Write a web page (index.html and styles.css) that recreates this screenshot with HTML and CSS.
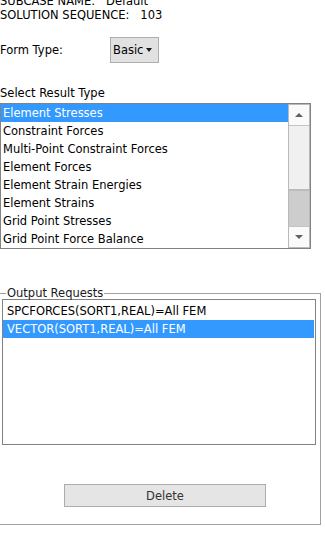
FILE: index.html
```html
<!DOCTYPE html>
<html>
<head>
<meta charset="utf-8">
<link rel="stylesheet" href="styles.css">
</head>
<body>
<div class="header">
  <div class="hline">SUBCASE NAME:&nbsp;&nbsp; Default</div>
  <div class="hline">SOLUTION SEQUENCE:&nbsp;&nbsp; 103</div>
</div>

<div class="form-row">
  <span class="form-label">Form Type:</span>
  <div class="combo"><span>Basic</span><i class="tri-down dark"></i></div>
</div>

<div class="section-label">Select Result Type</div>
<div class="listbox">
  <div class="items">
    <div class="row sel">Element Stresses</div>
    <div class="row">Constraint Forces</div>
    <div class="row">Multi-Point Constraint Forces</div>
    <div class="row">Element Forces</div>
    <div class="row">Element Strain Energies</div>
    <div class="row">Element Strains</div>
    <div class="row">Grid Point Stresses</div>
    <div class="row">Grid Point Force Balance</div>
  </div>
  <div class="vscroll">
    <div class="sbtn up"><i class="tri-up"></i></div>
    <div class="track"></div>
    <div class="thumb"></div>
    <div class="sbtn down"><i class="tri-down"></i></div>
  </div>
</div>

<fieldset class="group">
  <legend>Output Requests</legend>
  <div class="outlist">
    <div class="orow">SPCFORCES(SORT1,REAL)=All FEM</div>
    <div class="orow sel">VECTOR(SORT1,REAL)=All FEM</div>
  </div>
  <div class="btn-row"><div class="btn">Delete</div></div>
</fieldset>
</body>
</html>
```

FILE: styles.css
```css
html, body {
  margin: 0;
  padding: 0;
  background: #ffffff;
  overflow: hidden;
}
body {
  font-family: "DejaVu Sans", Verdana, sans-serif;
  font-size: 11.5px;
  color: #000;
  width: 325px;
  height: 545px;
}
.header {
  margin-top: -6px;
}
.hline {
  line-height: 14px;
  height: 14px;
  white-space: pre;
}
.form-row {
  display: flex;
  align-items: center;
  height: 26px;
  margin-top: 15px;
}
.form-label {
  width: 110px;
}
.combo {
  box-sizing: border-box;
  width: 49px;
  height: 26px;
  background: #e1e1e1;
  border: 1px solid #adadad;
  display: flex;
  align-items: center;
  padding-left: 2px;
  gap: 3px;
}
.tri-down {
  display: block;
  width: 0;
  height: 0;
  border-left: 4px solid transparent;
  border-right: 4px solid transparent;
  border-top: 4px solid #606060;
}
.tri-down.dark {
  border-top-color: #1a1a1a;
  border-left-width: 3.5px;
  border-right-width: 3.5px;
}
.tri-up {
  display: block;
  width: 0;
  height: 0;
  border-left: 4px solid transparent;
  border-right: 4px solid transparent;
  border-bottom: 4px solid #606060;
}
.section-label {
  margin-top: 23px;
  line-height: 14px;
  height: 14px;
}
.listbox {
  margin-top: 3px;
  box-sizing: border-box;
  width: 311px;
  height: 146px;
  border: 1px solid #828282;
  display: flex;
}
.items {
  flex: 1;
  overflow: hidden;
}
.row {
  height: 18px;
  line-height: 18px;
  padding-left: 2px;
  white-space: nowrap;
}
.row.sel, .orow.sel {
  background: #3399ff;
  color: #fff;
}
.vscroll {
  box-sizing: border-box;
  width: 22px;
  border: 1px solid #b9b9b9;
  display: flex;
  flex-direction: column;
}
.sbtn {
  height: 21px;
  box-sizing: border-box;
  background: #fafafa;
  display: flex;
  align-items: center;
  justify-content: center;
}
.sbtn.up {
  border-bottom: 1px solid #c4c4c4;
}
.sbtn.down {
  border-top: 1px solid #c4c4c4;
}
.track {
  height: 63px;
  background: #f0f0f0;
}
.thumb {
  box-sizing: border-box;
  height: 37px;
  background: #cdcdcd;
  border-top: 2px solid #bcbcbc;
}
.group {
  margin: 38px 0 0 -1px;
  box-sizing: border-box;
  width: 322px;
  border: 1px solid #a0a0a0;
  padding: 0 4px 17px 2px;
}
.group legend {
  margin-left: 4px;
  padding: 0 1px;
  line-height: 12px;
  color: #1a1a1a;
}
.outlist {
  box-sizing: border-box;
  width: 314px;
  height: 146px;
  border: 1px solid #828282;
  padding: 2px 1px 0 0;
}
.orow {
  height: 18px;
  line-height: 18px;
  padding-left: 4px;
  white-space: nowrap;
}
.btn-row {
  margin-top: 39px;
  padding-left: 62px;
}
.btn {
  box-sizing: border-box;
  width: 202px;
  height: 23px;
  background: #e5e5e5;
  border: 1px solid #adadad;
  color: #333;
  display: flex;
  align-items: center;
  justify-content: center;
}
```
